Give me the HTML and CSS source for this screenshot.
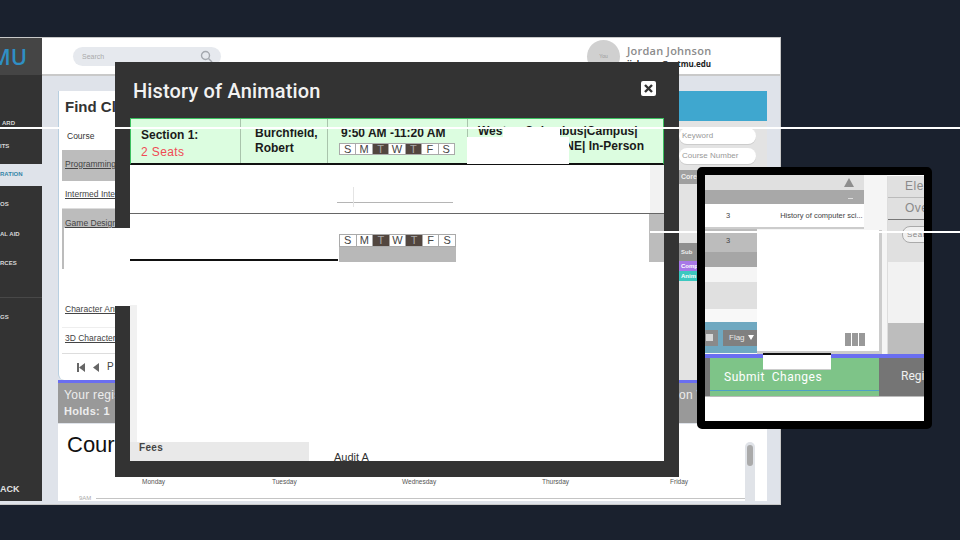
FILE: index.html
```html
<!DOCTYPE html>
<html lang="en">
<head>
  <meta charset="UTF-8">
  <title>Registration</title>
  <link rel="stylesheet" href="styles.css">
</head>
<body>
  <div class="stage">
    <!-- main app window -->
    <div class="app">
      <aside class="sidebar">
        <div class="logo"><span>MU</span></div>
        <nav class="nav">
          <div class="nav-item item-dash">ARD</div>
          <div class="nav-item item-ts">ITS</div>
          <div class="nav-item active">RATION</div>
          <div class="nav-item item-os">OS</div>
          <div class="nav-item item-aid">AL AID</div>
          <div class="nav-item item-rces">RCES</div>
          <div class="nav-line"></div>
          <div class="nav-item item-gs">GS</div>
        </nav>
        <div class="back">ACK</div>
      </aside>
      <div class="main">
        <header class="topbar">
          <div class="search">
            <span>Search</span>
            <svg width="13" height="13" viewBox="0 0 13 13" fill="none" stroke="#a4a8ae" stroke-width="1.4"><circle cx="5.5" cy="5.5" r="4"/><path d="M8.5 8.5L12 12"/></svg>
          </div>
          <div class="user">
            <div class="avatar">You</div>
            <div class="user-text">
              <div class="user-name">Jordan Johnson</div>
              <div class="user-mail">jjohnson@artmu.edu</div>
            </div>
          </div>
        </header>
        <div class="content">
          <div class="top-row">
            <section class="find">
              <h2>Find Cl</h2>
              <div class="find-table">
                <div class="row row-head">Course</div>
                <div class="row row-prog"><u>Programming</u></div>
                <div class="row row-inter"><u>Intermed Inte</u></div>
                <div class="row row-game"><u>Game Design</u></div>
                <div class="row row-char"><u>Character Ani</u></div>
                <div class="row row-3d"><u>3D Character</u></div>
                <div class="pager">
                  <svg width="8" height="9" viewBox="0 0 8 9" fill="#666"><path d="M0 0h2v9H0zM8 0v9L2 4.500z"/></svg>
                  <svg width="6" height="9" viewBox="0 0 6 9" fill="#666"><path d="M6 0v9L0 4.500z"/></svg>
                  <span>P</span>
                </div>
              </div>
            </section>
            <section class="filters">
              <div class="filters-head"></div>
              <div class="filters-body">
                <div class="pill">Keyword</div>
                <div class="pill">Course Number</div>
                <div class="core">Core</div>
                <div class="tags">
                  <div class="sub">Sub</div>
                  <div class="tag tag-purple">Comp</div>
                  <div class="tag tag-teal">Anim</div>
                </div>
              </div>
            </section>
          </div>
          <div class="reg-bar">
            <div class="reg-line"><span>Your regis</span><span>on V</span></div>
            <div class="holds">Holds: 1</div>
          </div>
          <section class="courses">
            <h1>Cours</h1>
            <div class="days">
              <span>Monday</span><span>Tuesday</span><span>Wednesday</span><span>Thursday</span><span>Friday</span>
            </div>
            <div class="time-row"><span>9AM</span><i></i></div>
            <div class="scroll"><div class="thumb"></div></div>
          </section>
        </div>
      </div>
    </div>

    <!-- section details modal -->
    <div class="modal">
      <div class="modal-head">
        <h3>History of Animation</h3>
        <div class="close">
          <svg width="9" height="9" viewBox="0 0 9 9" stroke="#333" stroke-width="2.400"><path d="M1 1l7 7M8 1L1 8"/></svg>
        </div>
      </div>
      <div class="modal-body">
        <div class="section-row">
          <div class="cell c-section">Section 1:<div class="seats">2 Seats</div></div>
          <div class="cell c-teacher">Burchfield,<br>Robert</div>
          <div class="cell c-time">
            <div>9:50 AM -11:20 AM</div>
            <div class="week"><span>S</span><span>M</span><span class="on">T</span><span>W</span><span class="on">T</span><span>F</span><span>S</span></div>
          </div>
          <div class="cell c-place">
            <div class="place-a">West Columbus|Campus|</div>
            <div class="place-b">NE| In-Person</div>
          </div>
        </div>
        <div class="blank-row">
          <div class="tick"></div>
          <div class="side-a"></div>
        </div>
        <div class="second-row">
          <div class="week-box">
            <div class="week"><span>S</span><span>M</span><span class="on">T</span><span>W</span><span class="on">T</span><span>F</span><span>S</span></div>
          </div>
          <div class="side-b"></div>
        </div>
        <div class="edge"></div>
        <div class="fees">Fees</div>
        <div class="audit">Audit A</div>
      </div>
    </div>
    <div class="patch patch-west"></div>
    <div class="patch patch-place"></div>
    <div class="patch patch-left"></div>
    <div class="patch patch-rule"></div>

    <!-- magnifier window -->
    <div class="lens">
      <div class="lens-left">
        <div class="lens-head"><i class="tri"></i></div>
        <div class="lens-bar"><b></b></div>
        <div class="lens-row"><span>3</span><span class="title">History of computer sci...</span></div>
        <div class="lens-row grey"><span>3</span></div>
        <div class="lens-dark"></div>
        <div class="lens-white"></div>
        <div class="lens-light"></div>
        <div class="lens-white short"></div>
        <div class="lens-tools">
          <i class="sq"></i>
          <div class="flag">Flag <i></i></div>
        </div>
      </div>
      <div class="lens-right">
        <div class="tab">Ele</div>
        <div class="tab last">Ove</div>
        <div class="tab-search"><span>Sear</span></div>
        <div class="lens-fill"></div>
        <div class="lens-block"></div>
      </div>
      <div class="lens-purple"></div>
      <div class="lens-actions">
        <div class="submit">Submit&nbsp; Changes</div>
        <div class="regi">Regi</div>
      </div>
      <div class="lens-panel">
        <div class="bars"><i></i><i></i><i></i></div>
      </div>
      <div class="lens-tab"></div>
    </div>

    <div class="rule rule-a"></div>
    <div class="rule rule-b"></div>
    <div class="rule rule-c"></div>
  </div>
</body>
</html>
```

FILE: styles.css
```css
* {
  box-sizing: border-box;
}
body {
  margin: 0;
  background: #1a212e;
  font-family: "Liberation Sans", Arial, sans-serif;
  overflow: hidden;
}
.stage {
  position: relative;
  width: 960px;
  height: 540px;
  overflow: hidden;
}
h1, h2, h3 {
  margin: 0;
}

/* app window */
.app {
  position: absolute;
  left: 0;
  top: 37px;
  width: 781px;
  height: 468px;
  display: flex;
  border-top: 1px solid #c8c8c8;
  border-right: 1px solid #c8c8c8;
  border-bottom: 1px solid #c8c8c8;
  background: #dfe3ea;
}
.sidebar {
  width: 42px;
  flex: none;
  background: #333;
  display: flex;
  flex-direction: column;
  margin-bottom: 3px;
  overflow: hidden;
}
.logo {
  height: 37px;
  background: #454545;
  color: #2f8fc4;
  font: 600 22px/37px "Open Sans", sans-serif;
  display: flex;
  justify-content: flex-end;
  padding-right: 15px;
  white-space: nowrap;
}
.nav {
  flex: 1;
  position: relative;
}
.nav-item {
  position: absolute;
  color: #d8d8d8;
  font: 700 6px "Liberation Sans", sans-serif;
  white-space: nowrap;
}
.item-dash { top: 45px; left: 2px; }
.item-ts { top: 68px; left: 0; }
.item-os { top: 126px; left: 0; }
.item-aid { top: 156px; left: 0; }
.item-rces { top: 185px; left: 0; }
.item-gs { top: 239px; left: 0; }
.nav-item.active {
  top: 89px;
  left: 0;
  right: 0;
  height: 22px;
  background: #dfe3ea;
  color: #3585a8;
  line-height: 21px;
}
.nav-line {
  position: absolute;
  left: 0;
  right: 0;
  top: 222px;
  height: 1px;
  background: #484848;
}
.back {
  color: #e4e4e4;
  font: 700 9px "Liberation Sans", sans-serif;
  padding: 0 0 7px 0;
}
.main {
  flex: 1;
  display: flex;
  flex-direction: column;
  min-width: 0;
}
.topbar {
  height: 38px;
  flex: none;
  background: #fff;
  border-bottom: 2px solid #c9c9c9;
  display: flex;
  align-items: center;
  padding-left: 31px;
}
.search {
  width: 148px;
  height: 19px;
  border-radius: 10px;
  background: #e6e9ee;
  color: #aaa;
  font-size: 7px;
  display: flex;
  align-items: center;
  justify-content: space-between;
  padding: 0 8px 0 9px;
}
.user {
  margin-left: 366px;
  display: flex;
  align-items: center;
  gap: 7px;
}
.avatar {
  width: 33px;
  height: 33px;
  border-radius: 50%;
  background: #d0d0d0;
  color: #999;
  font-size: 5px;
  text-align: center;
  line-height: 33px;
}
.user-name {
  color: #8b8b8b;
  font: 600 11px/14px "Open Sans", sans-serif;
  letter-spacing: .25px;
}
.user-mail {
  color: #222;
  font: 700 8px/11px "Open Sans", sans-serif;
}
.content {
  flex: 1;
  padding: 15px 13px 0 16px;
  display: flex;
  flex-direction: column;
  min-height: 0;
}
.top-row {
  height: 289px;
  flex: none;
  display: flex;
  justify-content: space-between;
}
.find {
  width: 130px;
  background: #fff;
  border-left: 1px solid #b8cfe0;
  border-radius: 0 0 0 6px;
  overflow: hidden;
}
.find h2 {
  height: 30px;
  padding: 7px 0 0 6px;
  font: 700 15px "Liberation Sans", sans-serif;
  color: #333;
  white-space: nowrap;
}
.find-table {
  padding-left: 3px;
  font: 8.5px/1 "Liberation Sans", sans-serif;
  color: #444;
}
.row {
  padding-left: 3px;
  white-space: nowrap;
  overflow: hidden;
}
.row-head { height: 29px; line-height: 31px; padding-left: 5px; color: #333; }
.row-prog { height: 31px; line-height: 29px; background: #bcbcbc; }
.row-inter { height: 28px; line-height: 26px; border-bottom: 1px solid #ddd; }
.row-game { height: 60px; padding-top: 10px; background: #bcbcbc; }
.row-char { height: 29px; margin-top: 30px; line-height: 20px; border-bottom: 1px solid #eee; }
.row-3d { height: 26px; line-height: 20px; border-bottom: 1px solid #ddd; }
.pager {
  height: 26px;
  padding-left: 15px;
  display: flex;
  align-items: center;
  gap: 8px;
  font-size: 10px;
}
.filters {
  width: 88px;
  display: flex;
  flex-direction: column;
}
.filters-head {
  height: 30px;
  background: #3fa7cf;
}
.filters-body {
  flex: 1;
  background: #e3e3e3;
  padding-top: 7px;
}
.pill {
  width: 77px;
  height: 16px;
  margin-bottom: 4px;
  border-radius: 8px;
  background: #fff;
  box-shadow: 0 1px 0 #ccc;
  color: #999;
  font: 8px/16px "Liberation Sans", sans-serif;
  padding-left: 3px;
  white-space: nowrap;
}
.core {
  height: 14px;
  margin-top: 6px;
  background: #a0a0a0;
  color: #eee;
  padding-left: 2px;
  font: 700 7px/14px "Liberation Sans", sans-serif;
}
.tags {
  margin-top: 59px;
  font: 700 6px/8px "Liberation Sans", sans-serif;
}
.sub {
  height: 18px;
  background: #8f8f8f;
  color: #eee;
  padding-left: 2px;
  line-height: 18px;
}
.tag {
  width: 18px;
  height: 10px;
  line-height: 10px;
  color: #fff;
  padding-left: 2px;
  overflow: hidden;
}
.tag-purple { background: #a878e8; }
.tag-teal { background: #3cc8c0; }
.reg-bar {
  height: 43px;
  flex: none;
  background: #999;
  border-top: 3px solid #6a6ef0;
  padding: 4px 0 0 6px;
  color: #ededed;
  font: 12px/16px "Liberation Sans", sans-serif;
}
.reg-line {
  display: flex;
  letter-spacing: .3px;
  white-space: nowrap;
}
.reg-line span:first-child {
  width: 615px;
  flex: none;
}
.holds {
  font-weight: 700;
  font-size: 11px;
  letter-spacing: .3px;
}
.courses {
  flex: 1;
  position: relative;
  background: #fff;
  margin-top: 1px;
  min-height: 0;
  border-bottom: 3px solid #dfe3ea;
}
.courses h1 {
  padding: 8px 0 0 9px;
  font: 400 22px "Liberation Sans", sans-serif;
  color: #111;
  height: 52px;
}
.days {
  position: relative;
  height: 12px;
  font: 6.5px/12px "Liberation Sans", sans-serif;
  color: #555;
}
.days span {
  position: absolute;
  top: 0;
}
.days span:nth-child(1) { left: 84px; }
.days span:nth-child(2) { left: 214px; }
.days span:nth-child(3) { left: 344px; }
.days span:nth-child(4) { left: 484px; }
.days span:nth-child(5) { left: 612px; }
.time-row {
  display: flex;
  align-items: center;
  gap: 5px;
  padding-left: 21px;
  margin-top: 6px;
  width: 687px;
  color: #aaa;
  font: 6px/8px "Liberation Sans", sans-serif;
}
.time-row i {
  flex: 1;
  height: 1px;
  background: #c4c4c4;
}
.scroll {
  position: absolute;
  left: 687px;
  top: 18px;
  width: 10px;
  bottom: 0;
  background: #e0e3e8;
  border-radius: 5px 5px 0 0;
  padding: 3px 2px;
}
.thumb {
  height: 21px;
  background: #aaa;
  border-radius: 3px;
}

/* modal */
.modal {
  position: absolute;
  left: 115px;
  top: 62px;
  width: 564px;
  height: 415px;
  background: #333;
  padding: 0 15px 16px;
  display: flex;
  flex-direction: column;
}
.modal-head {
  height: 56px;
  flex: none;
  display: flex;
  align-items: center;
  justify-content: space-between;
  padding: 0 8px 0 3px;
}
.modal-head h3 {
  color: #f2f2f2;
  font: 500 20px Roboto, sans-serif;
  letter-spacing: .15px;
  margin-top: 1px;
}
.close {
  width: 15px;
  height: 15px;
  background: #fff;
  border-radius: 2px;
  display: flex;
  align-items: center;
  justify-content: center;
  margin-top: -3px;
}
.modal-body {
  flex: 1;
  position: relative;
  background: #fff;
  min-height: 0;
}
.section-row {
  height: 47px;
  display: flex;
  background: #dcfde0;
  border: 1px solid #3cc060;
  border-bottom: 2px solid #111;
  font-weight: 700;
  font-size: 12px;
  line-height: 15px;
  color: #1a1a1a;
}
.cell {
  border-right: 1px solid #a9c4ac;
  white-space: nowrap;
}
.c-section { width: 110px; padding: 9px 0 0 10px; }
.seats { color: #f04a55; font-weight: 400; letter-spacing: .4px; margin-top: 2px; }
.c-teacher { width: 87px; padding: 7px 0 0 14px; }
.c-time { width: 140px; padding: 7px 0 0 13px; }
.c-place {
  flex: 1;
  border-right: 0;
  padding: 5px 19px 0 10px;
}
.place-a {
  word-spacing: 15px;
}
.place-b {
  text-align: right;
}
.week {
  display: flex;
  width: 116px;
  height: 12px;
  margin-top: 2px;
  margin-left: -2px;
  border: 1px solid #aaa;
  background: #fff;
  font: 400 11px/11px "Liberation Sans", sans-serif;
  color: #444;
}
.week span {
  flex: 1;
  text-align: center;
  border-right: 1px solid #aaa;
}
.week span:last-child {
  border-right: 0;
}
.week .on {
  background: #52463f;
  color: #aaa;
}
.blank-row {
  height: 49px;
  position: relative;
  border-bottom: 1px solid #666;
}
.tick {
  position: absolute;
  left: 207px;
  top: 37px;
  width: 116px;
  height: 1px;
  background: #b5b5b5;
}
.tick::before {
  content: "";
  position: absolute;
  left: 16px;
  top: -15px;
  width: 1px;
  height: 20px;
  background: #e4e4e4;
}
.side-a {
  position: absolute;
  right: 0;
  top: 0;
  bottom: 0;
  width: 14px;
  background: #f2f2f2;
}
.second-row {
  height: 47px;
  position: relative;
  border-bottom: 2px solid transparent;
}
.week-box {
  position: absolute;
  left: 209px;
  top: 20px;
  width: 117px;
  height: 28px;
  background: #b8b8b8;
}
.week-box .week {
  margin: 0;
  width: 117px;
  height: 13px;
}
.side-b {
  position: absolute;
  right: 0;
  top: 0;
  height: 48px;
  width: 15px;
  background: #bcbcbc;
}
.edge {
  position: absolute;
  left: 0;
  top: 187px;
  width: 7px;
  bottom: 19px;
  background: #f1f1f1;
}
.fees {
  position: absolute;
  left: 0;
  bottom: 0;
  width: 179px;
  height: 19px;
  background: #e9e9e9;
  padding-left: 9px;
  font: 700 10px/11px "Liberation Sans", sans-serif;
  letter-spacing: .3px;
  color: #444;
}
.audit {
  position: absolute;
  left: 204px;
  bottom: -3px;
  font: 11px/13px "Liberation Sans", sans-serif;
  color: #333;
}

/* patches where the picture was torn away */
.patch {
  position: absolute;
  background: #fff;
}
.patch-west { left: 503px; top: 129px; width: 57px; height: 9px; }
.patch-place { left: 467px; top: 137px; width: 102px; height: 27px; }
.patch-left { left: 64px; top: 228px; width: 66px; height: 78px; }
.patch-rule { left: 130px; top: 259px; width: 208px; height: 2px; background: #111; }

/* lens window */
.lens {
  position: absolute;
  left: 697px;
  top: 167px;
  width: 235px;
  height: 262px;
  background: #fff;
  border: 8px solid #000;
  border-radius: 5px;
  overflow: hidden;
}
.lens-left {
  position: absolute;
  left: 0;
  top: 0;
  width: 182px;
  height: 179px;
  font: 7.5px "Liberation Sans", sans-serif;
  color: #444;
  background: #f5f5f5;
}
.lens-head {
  width: 159px;
  height: 15px;
  background: #e0e0e0;
  position: relative;
}
.tri {
  position: absolute;
  right: 10px;
  top: 3px;
  border-left: 5px solid transparent;
  border-right: 5px solid transparent;
  border-bottom: 9px solid #8e8e8e;
}
.lens-bar {
  width: 159px;
  height: 14px;
  background: #a8a8a8;
  position: relative;
}
.lens-bar b {
  position: absolute;
  right: 11px;
  top: 8px;
  width: 5px;
  height: 1px;
  background: #ddd;
}
.lens-row {
  width: 159px;
  height: 25px;
  background: #fff;
  display: flex;
  align-items: center;
  padding-left: 21px;
  border-bottom: 2px solid #ccc;
}
.lens-row .title {
  margin-left: 50px;
  white-space: nowrap;
}
.lens-row.grey {
  width: 52px;
  height: 23px;
  background: #bcbcbc;
  border-bottom: 0;
}
.lens-dark {
  width: 52px;
  height: 15px;
  background: #a6a6a6;
}
.lens-white {
  width: 52px;
  height: 15px;
  background: #f5f5f5;
}
.lens-white.short {
  height: 13px;
  width: 159px;
  background: #f8f8f8;
}
.lens-light {
  width: 52px;
  height: 27px;
  background: #e0e0e0;
}
.lens-tools {
  height: 31px;
  width: 176px;
  background: #6fa8c0;
  display: flex;
  align-items: center;
  gap: 5px;
}
.sq {
  width: 13px;
  height: 16px;
  background: #8a8a8a;
  display: flex;
  align-items: center;
}
.sq::after {
  content: "";
  width: 7px;
  height: 7px;
  background: #d8d8d8;
  margin-left: 1px;
}
.flag {
  width: 34px;
  height: 16px;
  background: #808080;
  color: #e8e8e8;
  font: 8px/16px "Liberation Sans", sans-serif;
  padding-left: 6px;
  display: flex;
  align-items: center;
  gap: 3px;
}
.flag i {
  border-left: 3px solid transparent;
  border-right: 3px solid transparent;
  border-top: 5px solid #fff;
}
.lens-right {
  position: absolute;
  left: 182px;
  top: 1px;
  right: 0;
  height: 178px;
  background: #f2f2f2;
  color: #8a8a8a;
  font: 12px/21px "Liberation Sans", sans-serif;
  letter-spacing: .5px;
  border-left: 1px solid #ddd;
  white-space: nowrap;
  overflow: hidden;
}
.tab {
  height: 22px;
  background: #e0e0e0;
  padding-left: 17px;
  border-bottom: 1px solid #bbb;
}
.tab.last { border-bottom: 1px solid #777; }
.tab-search {
  height: 42px;
  background: #e0e0e0;
  padding: 6px 0 0 14px;
}
.tab-search span {
  display: block;
  width: 40px;
  height: 17px;
  border: 1px solid #aaa;
  border-radius: 8px;
  background: #f0f0f0;
  color: #888;
  font: 8px/15px "Liberation Sans", sans-serif;
  padding-left: 4px;
}
.lens-fill {
  height: 61px;
}
.lens-block {
  height: 31px;
  background: #bdbdbd;
}
.lens-purple {
  position: absolute;
  left: 0;
  right: 0;
  top: 179px;
  height: 4px;
  background: #6a6ef0;
}
.lens-actions {
  position: absolute;
  left: 0;
  right: 0;
  top: 183px;
  height: 39px;
  background: #757575;
  display: flex;
  padding-left: 5px;
  border-bottom: 1px solid #bbb;
}
.submit {
  width: 169px;
  flex: none;
  background: #7ec488;
  box-shadow: inset 0 -5px 0 #7ec488, inset 0 -6px 0 #4ea0c8;
  color: #fff;
  font: 400 12px/38px Roboto, sans-serif;
  letter-spacing: .5px;
  padding-left: 14px;
}
.regi {
  padding-left: 22px;
  color: #f0f0f0;
  font: 12px/36px Roboto, sans-serif;
  white-space: nowrap;
}
.lens-panel {
  position: absolute;
  left: 52px;
  top: 55px;
  width: 125px;
  height: 124px;
  background: #fff;
  border-right: 3px solid #ccc;
  border-bottom: 3px solid #ccc;
  display: flex;
  align-items: flex-end;
  justify-content: flex-end;
  padding: 0 14px 5px 0;
}
.bars {
  display: flex;
  gap: 1px;
}
.bars i {
  width: 6px;
  height: 13px;
  background: #999;
}
.lens-tab {
  position: absolute;
  left: 58px;
  top: 178px;
  width: 68px;
  height: 17px;
  background: #fff;
  border-top: 2px solid #111;
  border-bottom: 1px solid #ccc;
}

/* thin white lines over everything */
.rule {
  position: absolute;
  height: 2px;
  background: #fff;
}
.rule-a { left: 0; top: 127px; width: 960px; }
.rule-b { left: 650px; top: 231px; width: 47px; }
.rule-c { left: 705px; top: 231px; width: 255px; }
```
